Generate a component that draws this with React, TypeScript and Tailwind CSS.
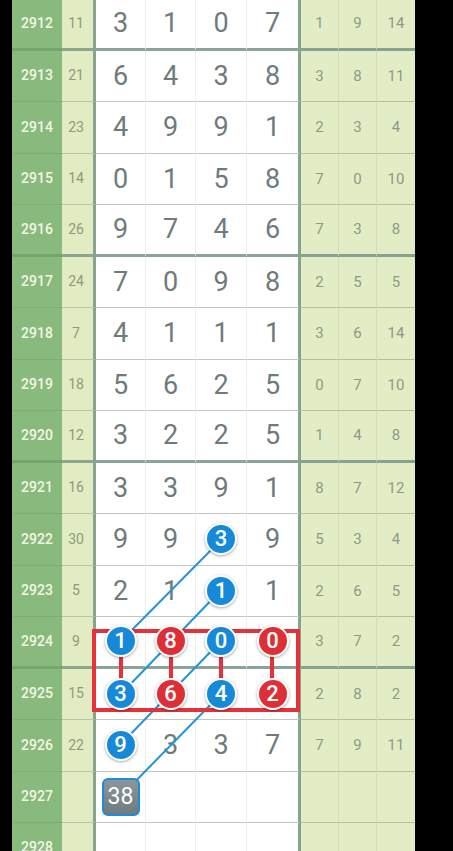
import React from 'react';

type Row = { no: string; sum: string; digits: string[]; tail: string[] };

const rows: Row[] = [
  { no: '2912', sum: '11', digits: ['3', '1', '0', '7'], tail: ['1', '9', '14'] },
  { no: '2913', sum: '21', digits: ['6', '4', '3', '8'], tail: ['3', '8', '11'] },
  { no: '2914', sum: '23', digits: ['4', '9', '9', '1'], tail: ['2', '3', '4'] },
  { no: '2915', sum: '14', digits: ['0', '1', '5', '8'], tail: ['7', '0', '10'] },
  { no: '2916', sum: '26', digits: ['9', '7', '4', '6'], tail: ['7', '3', '8'] },
  { no: '2917', sum: '24', digits: ['7', '0', '9', '8'], tail: ['2', '5', '5'] },
  { no: '2918', sum: '7', digits: ['4', '1', '1', '1'], tail: ['3', '6', '14'] },
  { no: '2919', sum: '18', digits: ['5', '6', '2', '5'], tail: ['0', '7', '10'] },
  { no: '2920', sum: '12', digits: ['3', '2', '2', '5'], tail: ['1', '4', '8'] },
  { no: '2921', sum: '16', digits: ['3', '3', '9', '1'], tail: ['8', '7', '12'] },
  { no: '2922', sum: '30', digits: ['9', '9', '3', '9'], tail: ['5', '3', '4'] },
  { no: '2923', sum: '5', digits: ['2', '1', '1', '1'], tail: ['2', '6', '5'] },
  { no: '2924', sum: '9', digits: ['1', '8', '0', '0'], tail: ['3', '7', '2'] },
  { no: '2925', sum: '15', digits: ['3', '6', '4', '2'], tail: ['2', '8', '2'] },
  { no: '2926', sum: '22', digits: ['9', '3', '3', '7'], tail: ['7', '9', '11'] },
  { no: '2927', sum: '', digits: ['', '', '', ''], tail: ['', '', ''] },
  { no: '2928', sum: '', digits: ['', '', '', ''], tail: ['', '', ''] },
];

// 'b' = blue ball, 'r' = red ball
const balls: Record<string, 'b' | 'r'> = {
  '2922-2': 'b',
  '2923-2': 'b',
  '2924-0': 'b',
  '2924-1': 'r',
  '2924-2': 'b',
  '2924-3': 'r',
  '2925-0': 'b',
  '2925-1': 'r',
  '2925-2': 'b',
  '2925-3': 'r',
  '2926-0': 'b',
};

const digitWidths = ['w-[50px]', 'w-[50px]', 'w-[51px]', 'w-[54px]'];

const Ball = ({ n, color }: { n: string; color: 'b' | 'r' }) => (
  <span
    className={`relative z-20 flex h-[32px] w-[32px] items-center justify-center rounded-full border-2 border-white text-[22px] font-medium leading-none text-white shadow-[0_1px_3px_rgba(0,0,0,0.35)] ${
      color === 'b' ? 'bg-[#168ad8]' : 'bg-[#df2f36]'
    }`}
  >
    {n}
  </span>
);

export default function App() {
  return (
    <div className="relative h-[851px] w-[453px] overflow-hidden bg-black font-['Roboto','Liberation_Sans',sans-serif]">
      <div className="ml-[12px] mt-[-1px] flex w-[403px] flex-col">
        {rows.map((r) => {
          const thick = (Number(r.no) - 2912) % 4 === 0;
          const b = thick ? 'border-b-[3px]' : 'border-b';
          return (
            <div key={r.no} className="flex h-[51.5px]">
              <div
                className={`flex w-[50px] items-center justify-center bg-[#89ba7d] text-[14px] font-medium text-[#f3f7e6] ${b} ${
                  thick ? 'border-[#77a46c]' : 'border-[#7fae73]'
                }`}
              >
                {r.no}
              </div>
              <div
                className={`flex w-[34px] items-center justify-center border-r-[3px] border-r-[#86a38f] bg-[#e2ecc3] pr-[3px] text-[14px] text-[#8c9a7c] ${b} ${
                  thick ? 'border-b-[#8aa590]' : 'border-b-[#b9c4a6]'
                }`}
              >
                {r.sum}
              </div>
              {r.digits.map((d, i) => {
                const key = `${r.no}-${i}`;
                const ball = balls[key];
                return (
                  <div
                    key={i}
                    className={`flex ${digitWidths[i]} items-center justify-center bg-white text-[27px] text-[#6f7b7b] ${b} ${
                      thick ? 'border-b-[#8aa497]' : 'border-b-[#c3c7c3]'
                    } ${i < 3 ? 'border-r border-r-[#eef0ee]' : 'border-r-[3px] border-r-[#86a38f]'}`}
                  >
                    {r.no === '2927' && i === 0 ? (
                      <span className="relative z-20 flex h-[38px] w-[38px] items-center justify-center rounded-[6px] border-2 border-[#1a8ed8] bg-[linear-gradient(180deg,#8a969b,#6f7b80)] text-[23px] leading-none text-white">
                        38
                      </span>
                    ) : ball ? (
                      <Ball n={d} color={ball} />
                    ) : (
                      d
                    )}
                  </div>
                );
              })}
              {r.tail.map((t, i) => (
                <div
                  key={i}
                  className={`flex w-[38px] items-center justify-center bg-[#e2edc6] text-[15px] text-[#8e9986] ${b} ${
                    thick ? 'border-b-[#86a38f]' : 'border-b-[#b3c0a4]'
                  } ${i < 2 ? 'border-r border-r-[#d0ddb8]' : ''}`}
                >
                  {t}
                </div>
              ))}
            </div>
          );
        })}
      </div>

      <svg className="pointer-events-none absolute left-0 top-0 z-10" width="453" height="851">
        <g stroke="#2594d4" strokeWidth="2">
          <line x1="221" y1="540" x2="121" y2="641" />
          <line x1="221" y1="590" x2="121" y2="694" />
          <line x1="221" y1="641" x2="121" y2="744" />
          <line x1="221" y1="694" x2="121" y2="796" />
        </g>
        <g stroke="#e5323a" strokeWidth="4" fill="none">
          <rect x="94" y="631" width="204" height="79" />
          <line x1="121" y1="641" x2="121" y2="694" />
          <line x1="171" y1="641" x2="171" y2="694" />
          <line x1="221" y1="641" x2="221" y2="694" />
          <line x1="272" y1="641" x2="272" y2="694" />
        </g>
      </svg>
    </div>
  );
}
